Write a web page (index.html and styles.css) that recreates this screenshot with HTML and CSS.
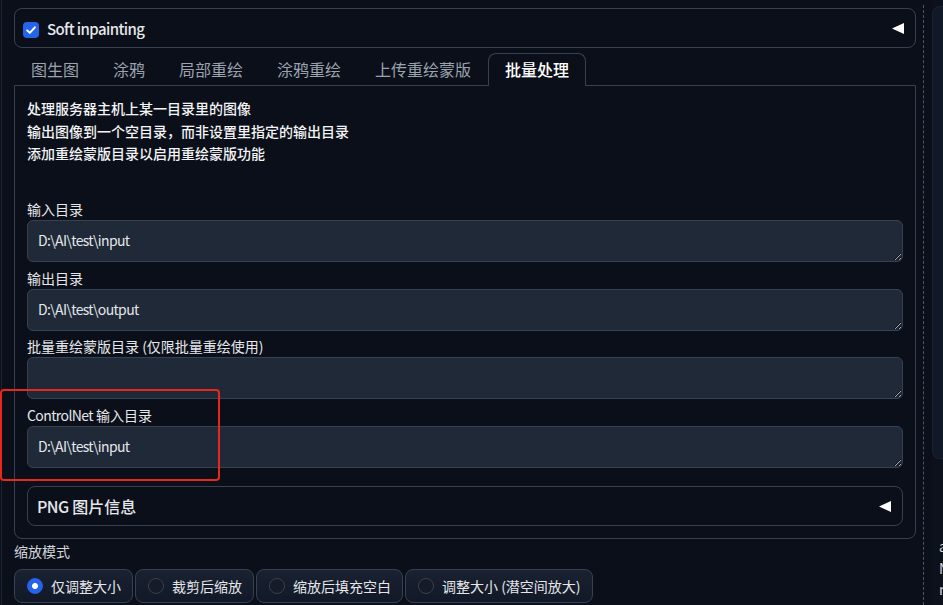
FILE: index.html
```html
<!DOCTYPE html>
<html lang="zh">
<head>
<meta charset="utf-8">
<title>批量处理</title>
<link rel="stylesheet" href="styles.css">
</head>
<body>
<div class="app">
  <div class="main">
    <div class="col-left">
      <div class="acc acc-soft">
        <span class="cb"><svg width="16" height="16" viewBox="0 0 16 16"><path d="M4.2 8.4l2.6 2.5L11.9 5.3" fill="none" stroke="#fff" stroke-width="2" stroke-linecap="round" stroke-linejoin="round"/></svg></span>
        <span class="soft-label lat">Soft inpainting</span>
        <svg class="tri" width="12" height="11" viewBox="0 0 12 11"><polygon points="12,0 12,11 0,5.5" fill="#fff"/></svg>
      </div>

      <div class="tabs">
        <div class="tab-nav">
          <div class="tab">图生图</div>
          <div class="tab">涂鸦</div>
          <div class="tab">局部重绘</div>
          <div class="tab">涂鸦重绘</div>
          <div class="tab">上传重绘蒙版</div>
          <div class="tab active">批量处理</div>
        </div>
        <div class="tab-panel">
          <div class="desc">
            <p>处理服务器主机上某一目录里的图像</p>
            <p>输出图像到一个空目录，而非设置里指定的输出目录</p>
            <p>添加重绘蒙版目录以启用重绘蒙版功能</p>
          </div>
          <div class="field">
            <div class="field-label">输入目录</div>
            <textarea class="input" readonly>D:\AI\test\input</textarea>
          </div>
          <div class="field">
            <div class="field-label">输出目录</div>
            <textarea class="input" readonly>D:\AI\test\output</textarea>
          </div>
          <div class="field">
            <div class="field-label">批量重绘蒙版目录 (仅限批量重绘使用)</div>
            <textarea class="input" readonly></textarea>
          </div>
          <div class="field">
            <div class="field-label"><span class="lat">ControlNet</span> 输入目录</div>
            <textarea class="input" readonly>D:\AI\test\input</textarea>
          </div>
          <div class="acc acc-png">
            <span class="png-label"><span class="lat">PNG</span> 图片信息</span>
            <svg class="tri" width="12" height="11" viewBox="0 0 12 11"><polygon points="12,0 12,11 0,5.5" fill="#fff"/></svg>
          </div>
        </div>
      </div>

      <div class="resize-label">缩放模式</div>
      <div class="radios">
        <label class="radio"><span class="dot on"></span><span>仅调整大小</span></label>
        <label class="radio"><span class="dot"></span><span>裁剪后缩放</span></label>
        <label class="radio"><span class="dot"></span><span>缩放后填充空白</span></label>
        <label class="radio"><span class="dot"></span><span>调整大小 (潜空间放大)</span></label>
      </div>
    </div>

    <div class="divider"></div>

    <div class="col-right">
      <div class="rpanel"></div>
      <div class="rtext">
        <div>a</div>
        <div>N</div>
        <div>n</div>
      </div>
    </div>
  </div>
  <div class="annot"></div>
</div>
</body>
</html>
```
FILE: styles.css
```css
html {
  color-scheme: dark;
}
body {
  margin: 0;
  background: #0b0f19;
  font-family: "Noto Sans CJK SC", "Noto Sans", sans-serif;
  color: #e5e7eb;
}
.app {
  position: relative;
  width: 943px;
  height: 605px;
  overflow: hidden;
}
.main {
  display: flex;
  height: 100%;
}
.col-left {
  flex: 0 0 902px;
  margin-left: 1px;
  border-left: 1px solid #1d2331;
  padding: 8px 0 0 12px;
}
.divider {
  flex: 0 0 auto;
  width: 0;
  margin-left: 7px;
  margin-top: 5px;
  border-left: 1px dashed #4b5563;
}
.col-right {
  flex: 0 0 300px;
  margin-left: 8px;
  background: #0d111c;
}
.lat {
  letter-spacing: -0.6px;
}

/* accordions */
.acc {
  box-sizing: border-box;
  height: 40px;
  border: 1px solid #374151;
  border-radius: 8px;
  display: flex;
  align-items: center;
}
.acc-soft {
  padding: 0 11px 0 8px;
}
.cb {
  width: 16px;
  height: 16px;
  border-radius: 4px;
  background: #2563eb;
  margin-top: 4px;
  display: flex;
}
.soft-label {
  margin-left: 8px;
  flex: 1;
  font-size: 15px;
  font-weight: 500;
  color: #e5e7eb;
}
.tri {
  flex: 0 0 auto;
}

/* tabs */
.tab-nav {
  display: flex;
  margin-top: 5px;
}
.tab {
  box-sizing: border-box;
  height: 32px;
  padding: 0 16px;
  border: 1px solid transparent;
  border-bottom: 0;
  border-radius: 8px 8px 0 0;
  line-height: 31px;
  font-size: 16px;
  color: #9ca3af;
}
.tab.active {
  height: 33px;
  margin-bottom: -1px;
  border-color: #374151;
  background: #0b0f19;
  color: #ffffff;
  font-weight: 500;
  position: relative;
  z-index: 1;
}
.tab-panel {
  border: 1px solid #374151;
  border-radius: 0 0 8px 8px;
  padding: 11px 12px 11.5px;
}
.desc {
  margin-bottom: 34.5px;
}
.desc p {
  margin: 0;
  font-size: 14px;
  line-height: 22.5px;
  font-weight: 500;
  color: #f3f4f6;
}
.field + .field {
  margin-top: 5.5px;
}
.field-label {
  font-size: 14px;
  line-height: 20px;
  margin-bottom: 1px;
  color: #e5e7eb;
}
.input {
  display: block;
  width: 100%;
  box-sizing: border-box;
  height: 42px;
  padding: 9px 10px 11px;
  border: 1px solid #374151;
  border-radius: 6px;
  background: #1f2937;
  color: #e5e7eb;
  font-family: "Noto Sans CJK SC", "Noto Sans", sans-serif;
  font-size: 14px;
  line-height: 20px;
  letter-spacing: -0.65px;
  resize: vertical;
  outline: none;
  overflow: hidden;
}
.acc-png {
  margin-top: 18.5px;
  padding: 0 11px 0 9px;
}
.png-label {
  flex: 1;
  font-size: 16px;
  font-weight: 500;
  color: #e5e7eb;
}

/* resize mode */
.resize-label {
  margin-top: 2.5px;
  font-size: 14px;
  line-height: 20px;
  color: #d1d5db;
}
.radios {
  display: flex;
  gap: 2px;
  margin-top: 8px;
}
.radio {
  box-sizing: border-box;
  height: 34px;
  border: 1px solid #374151;
  border-radius: 8px;
  padding: 0 11px 0 12px;
  display: flex;
  align-items: center;
  gap: 8px;
  font-size: 14px;
  color: #e5e7eb;
  background: linear-gradient(to top, #111827, #1a2130);
}
.dot {
  box-sizing: border-box;
  width: 16px;
  height: 16px;
  border-radius: 50%;
  border: 1px solid #374151;
  background: #151b28;
}
.dot.on {
  border-color: #2563eb;
  background: radial-gradient(circle, #ffffff 0 2.6px, #2563eb 3.3px);
}

/* right column */
.rpanel {
  margin-top: 6px;
  height: 451px;
  border: 1px solid #1c2230;
  border-right: 0;
  border-radius: 8px 0 0 8px;
  background: #111827;
}
.rtext {
  padding: 77px 0 0 7px;
  font-size: 14px;
  line-height: 21.5px;
  color: #d1d5db;
}

/* annotation overlay */
.annot {
  position: absolute;
  left: 0;
  top: 389px;
  width: 220px;
  height: 92px;
  box-sizing: border-box;
  border: 2px solid #e8271d;
  border-radius: 4px;
  pointer-events: none;
}
```
